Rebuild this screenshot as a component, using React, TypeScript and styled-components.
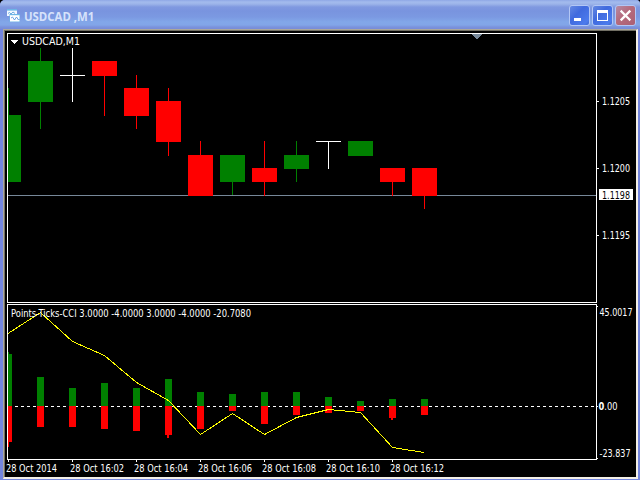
import React from "react";
import styled, { createGlobalStyle } from "styled-components";

const GlobalStyle = createGlobalStyle`
  html, body { margin: 0; padding: 0; background: #000; overflow: hidden; }
`;

const Window = styled.div`
  box-sizing: border-box;
  width: 640px;
  height: 480px;
  display: flex;
  flex-direction: column;
  background: #7486de;
  border-top-left-radius: 5px;
  border-top-right-radius: 4px;
  overflow: hidden;
`;

const TitleBar = styled.header`
  box-sizing: border-box;
  height: 29px;
  flex: none;
  display: flex;
  align-items: center;
  padding: 2px 4px 0 7px;
  background: linear-gradient(
    to bottom,
    #8fa8e6 0px, #a3bbed 2px, #9cb4e9 4px, #8099e0 7px, #7994df 11px,
    #7b99e2 17px, #82a7e9 22px, #82a5e8 25px, #7b93dc 27px, #788bd8 29px
  );
`;

const Title = styled.h1`
  margin: 0 0 0 4px;
  flex: 1;
  font: bold 13px/16px "Open Sans", sans-serif;
  color: #d6e2fb;
  transform: scaleX(0.875);
  transform-origin: left center;
`;

const Buttons = styled.div`
  display: flex;
  gap: 2px;
`;

const CaptionButton = styled.button<{ $danger?: boolean }>`
  box-sizing: border-box;
  width: 21px;
  height: 21px;
  padding: 0;
  border: 1px solid #b3c7f5;
  border-radius: 3px;
  display: flex;
  align-items: center;
  justify-content: center;
  background: ${(p) =>
    p.$danger
      ? "linear-gradient(135deg, #b58ba5, #b56a7c 45%, #ab6074)"
      : "linear-gradient(135deg, #6488e2, #406ade 40%, #4c7bed 85%, #3e66cf)"};
`;

const Client = styled.main`
  box-sizing: border-box;
  flex: 1;
  margin: 0 2px 1px 3px;
  border-style: solid;
  border-width: 1px 2px 2px 1px;
  border-color: #aca899 #f4f0e8 #f4f0e8 #aca899;
  background: #000;
`;

const ChartArea = styled.div`
  box-sizing: border-box;
  width: 632px;
  height: 447px;
  border-top: 1px solid #716f64;
  border-left: 1px solid #716f64;
  padding: 2px 0 0 2px;
  display: grid;
  grid-template-columns: 590px 39px;
  grid-template-rows: 270px 156px 17px;
  row-gap: 1px;
`;

const Pane = styled.section`
  box-sizing: border-box;
  border: 1px solid #fff;
  display: flex;
`;

const Drawing = styled.svg`
  display: block;
  flex: none;
  overflow: visible;
  font-family: "DejaVu Sans", sans-serif;
  font-size: 10.5px;
  fill: #fff;
`;

const TimeRow = styled.div`
  grid-column: 1 / 3;
  margin-top: -1px;
`;

const GREEN = "#008000";
const RED = "#ff0000";
const WHITE = "#ffffff";

type Candle = { x: number; top: number; bottom: number; high: number; low: number; color: string };

const candles: Candle[] = [
  { x: 8, top: 115, bottom: 182, high: 88, low: 182, color: GREEN },
  { x: 40, top: 61, bottom: 102, high: 48, low: 129, color: GREEN },
  { x: 72, top: 75, bottom: 76, high: 48, low: 102, color: WHITE },
  { x: 104, top: 61, bottom: 76, high: 61, low: 116, color: RED },
  { x: 136, top: 88, bottom: 116, high: 75, low: 129, color: RED },
  { x: 168, top: 101, bottom: 142, high: 88, low: 156, color: RED },
  { x: 200, top: 155, bottom: 196, high: 141, low: 196, color: RED },
  { x: 232, top: 155, bottom: 182, high: 155, low: 195, color: GREEN },
  { x: 264, top: 168, bottom: 182, high: 141, low: 196, color: RED },
  { x: 296, top: 155, bottom: 169, high: 141, low: 182, color: GREEN },
  { x: 328, top: 141, bottom: 142, high: 141, low: 169, color: WHITE },
  { x: 360, top: 141, bottom: 156, high: 141, low: 156, color: GREEN },
  { x: 392, top: 168, bottom: 182, high: 168, low: 196, color: RED },
  { x: 424, top: 168, bottom: 196, high: 168, low: 209, color: RED },
];

const bars = [
  [8, 354, 442], [40, 377, 427], [72, 388, 427], [104, 383, 429], [136, 388, 431],
  [168, 379, 435], [200, 392, 429], [232, 394, 411], [264, 392, 424], [296, 392, 415],
  [328, 397, 413], [360, 401, 411], [392, 399, 418], [424, 399, 415],
];

const times: [number, string, number][] = [
  [8, "28 Oct 2014", 51], [72, "28 Oct 16:02", 54], [136, "28 Oct 16:04", 54],
  [200, "28 Oct 16:06", 54], [264, "28 Oct 16:08", 54], [328, "28 Oct 16:10", 54],
  [392, "28 Oct 16:12", 54],
];

type LabelProps = { x: number; y: number; w: number; children: React.ReactNode; fill?: string };

const Label = ({ x, y, w, children, fill }: LabelProps) => (
  <text x={x} y={y} textLength={w} lengthAdjust="spacingAndGlyphs" fill={fill}>{children}</text>
);

const Tick = ({ y, w = 2 }: { y: number; w?: number }) => <rect x="597" y={y} width={w} height="1" />;

const CandleMark = ({ c }: { c: Candle }) => {
  const left = Math.max(8, c.x - 12);
  return (
    <g fill={c.color}>
      <rect x={left} y={c.top} width={c.x + 13 - left} height={c.bottom - c.top} />
      <rect x={c.x} y={c.high} width="1" height={c.low - c.high} />
    </g>
  );
};

const WindowIcon = () => (
  <svg width="13" height="13" viewBox="0 0 13 13">
    <rect x="0" y="0" width="10" height="7" fill="#f2f7ff" />
    <rect x="0" y="0" width="10" height="1.6" fill="#6db5e6" />
    <path d="M1 4.5l1.5-1 1.5 1.5 2-2 2 1.5" fill="none" stroke="#4a9bdc" strokeWidth="0.8" />
    <rect x="2.5" y="5" width="10.5" height="8" fill="#6db5e6" />
    <rect x="3" y="6.2" width="9.5" height="6.3" fill="#fff" />
    <path d="M4 9l1.5-1 2 3 2-3 2 3 1-1" fill="none" stroke="#4a8fdc" strokeWidth="0.8" />
  </svg>
);

export default function App() {
  return (
    <>
      <GlobalStyle />
      <Window>
        <TitleBar>
          <WindowIcon />
          <Title>USDCAD ,M1</Title>
          <Buttons>
            <CaptionButton aria-label="Minimize">
              <svg width="19" height="19"><rect x="4" y="12" width="7" height="3" fill="#fff" /></svg>
            </CaptionButton>
            <CaptionButton aria-label="Maximize">
              <svg width="19" height="19" shapeRendering="crispEdges">
                <path fillRule="evenodd" d="M4 4h11v11H4zM5 7v7h9V7z" fill="#fff" />
              </svg>
            </CaptionButton>
            <CaptionButton $danger aria-label="Close">
              <svg width="19" height="19"><path d="M5.5 5.5l8 8M13.5 5.5l-8 8" stroke="#fff" strokeWidth="2.3" strokeLinecap="square" /></svg>
            </CaptionButton>
          </Buttons>
        </TitleBar>
        <Client>
          <ChartArea>
            <Pane>
              <Drawing width="588" height="268" viewBox="8 34 588 268" shapeRendering="crispEdges">
                <rect x="8" y="195" width="588" height="1" fill="#778899" />
                {candles.map((c) => <CandleMark key={c.x} c={c} />)}
                <path d="M471 34h11l-5 5h-1z" fill="#778899" />
                <path d="M11 40h7v1h-1v1h-1v1h-1v1h-1v-1h-1v-1h-1v-1h-1z" />
                <Label x={22} y={45} w={58}>USDCAD,M1</Label>
              </Drawing>
            </Pane>
            <Drawing width="39" height="270" viewBox="597 33 39 270">
              <Tick y={101} /><Tick y={168} /><Tick y={235} />
              <Label x={602} y={105} w={28}>1.1205</Label>
              <Label x={602} y={172} w={28}>1.1200</Label>
              <rect x="599" y="189" width="34" height="11" />
              <Label x={602} y={199} w={28} fill="#000">1.1198</Label>
              <Label x={602} y={239} w={28}>1.1195</Label>
            </Drawing>
            <Pane>
              <Drawing width="588" height="154" viewBox="8 305 588 154" shapeRendering="crispEdges">
                <path d="M9 406.5H596" stroke="#fff" strokeDasharray="3 3" />
                {bars.map(([x, top, bottom]) => {
                  const left = Math.max(8, x - 3);
                  const width = x + 4 - left;
                  return (
                    <g key={x}>
                      <rect x={left} y={top} width={width} height={406 - top} fill={GREEN} />
                      <rect x={left} y="406" width={width} height={bottom - 406} fill={RED} />
                    </g>
                  );
                })}
                <rect x="8" y="352" width="1" height="2" fill={GREEN} />
                <path d="M8 442h1v5h-1zM167 435h2v3h-2zM391 418h2v2h-2z" fill={RED} />
                <polyline
                  points="8,333.5 40.5,312.5 72.5,341.5 104.5,355.5 136.5,382.5 168.5,400.5 200.5,434.5 232.5,413.5 264.5,434.5 296.5,417.5 328.5,409.5 360.5,412.5 392.5,447.5 424,452.5"
                  fill="none"
                  stroke="#ffff00"
                />
                <Label x={11} y={317} w={240}>Points-Ticks-CCI 3.0000 -4.0000 3.0000 -4.0000 -20.7080</Label>
              </Drawing>
            </Pane>
            <Drawing width="39" height="156" viewBox="597 304 39 156">
              <Tick y={306} w={1} /><Tick y={406} w={1} /><Tick y={458} w={1} />
              <Label x={599.5} y={316} w={33}>45.0017</Label>
              <Label x={598.5} y={410} w={19}><tspan fontWeight="bold">0</tspan>.00</Label>
              <Label x={599.5} y={457} w={31}>-23.837</Label>
            </Drawing>
            <TimeRow>
              <Drawing width="629" height="17" viewBox="7 460 629 17">
                {times.map(([x, text, w]) => (
                  <g key={x}>
                    <rect x={x} y="460" width="1" height="2" />
                    <Label x={x - 2} y={472} w={w}>{text}</Label>
                  </g>
                ))}
              </Drawing>
            </TimeRow>
          </ChartArea>
        </Client>
      </Window>
    </>
  );
}
